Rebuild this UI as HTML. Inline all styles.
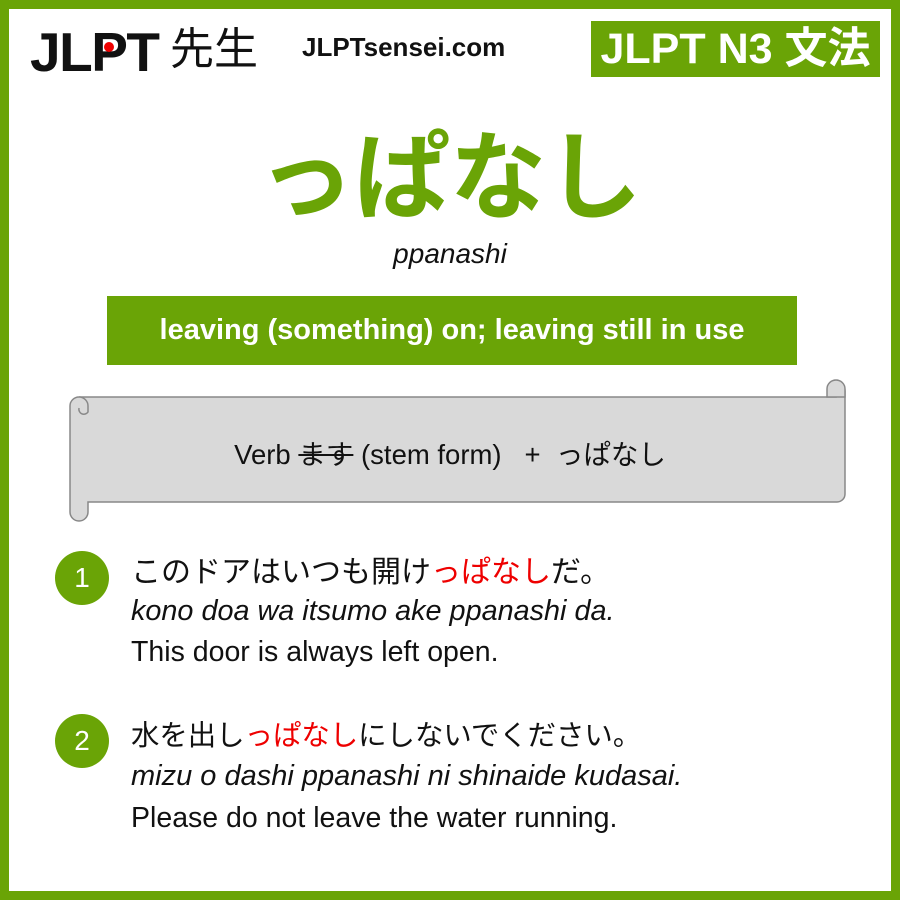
<!DOCTYPE html>
<html><head><meta charset="utf-8"><style>
*{margin:0;padding:0;box-sizing:border-box}
body{width:900px;height:900px;background:#fff;position:relative;overflow:hidden;font-family:"Liberation Sans","Noto Sans CJK JP",sans-serif}
.frame{position:absolute;left:0;top:0;width:900px;height:900px;border:9px solid #6aa406}
.a{position:absolute;white-space:nowrap}
.c{border-radius:50%;background:#6aa406;color:#fff;width:54px;height:54px;text-align:center;line-height:54px;font-size:28px}
.r{color:#e00}
</style></head><body>
<div class="frame"></div>
<div class="a" style="left:30px;top:20px;font-size:55px;font-weight:bold;letter-spacing:-1.5px;color:#111;line-height:64px">JL<span style="position:relative">P<span style="position:absolute;left:13px;top:21px;width:10px;height:10px;border-radius:50%;background:#e00"></span></span>T</div>
<div class="a" style="left:170px;top:22px;font-size:44px;color:#111;line-height:56px">先生</div>
<div class="a" style="left:302px;top:32px;font-size:26px;font-weight:bold;color:#111">JLPTsensei.com</div>
<div class="a" style="left:591px;top:21px;width:289px;height:56px;background:#6aa406;color:#fff;font-size:43px;font-weight:bold;line-height:56px;text-align:center">JLPT N3 文法</div>
<div class="a" style="left:0;width:900px;top:124px;text-align:center;font-size:96px;font-weight:bold;color:#6aa406;line-height:110px">っぱなし</div>
<div class="a" style="left:0;width:900px;top:238px;text-align:center;font-size:28px;font-style:italic;color:#111">ppanashi</div>
<div class="a" style="left:107px;top:296px;width:690px;height:69px;background:#6aa406;color:#fff;font-size:29px;font-weight:bold;line-height:69px;text-align:center">leaving (something) on; leaving still in use</div>
<svg class="a" style="left:0;top:0" width="900" height="900">
<g stroke="#888" stroke-width="1.5" fill="#d9d9d9">
<path d="M79 397 H836 V382 a9 9 0 0 1 9 9 V494 a8 8 0 0 1 -8 8 H88 V512 a9 9 0 0 1 -18 0 V406 a9 9 0 0 1 9 -9 Z"/>
<path d="M827 397 V389 a9 9 0 0 1 18 0 V397 Z"/>
<path d="M79 397 a9 9 0 0 1 9 9 v6 a5 5 0 0 1 -9 -4"/>
</g></svg>
<div class="a" style="left:0;width:900px;top:432px;text-align:center;font-size:27.5px;color:#111">Verb <s>ます</s> (stem form) &nbsp; + &nbsp;っぱなし</div>
<div class="a c" style="left:55px;top:551px">1</div>
<div class="a" style="left:131px;top:547px;font-size:30px;color:#111">このドアはいつも開け<span class="r">っぱなし</span>だ。</div>
<div class="a" style="left:131px;top:595px;font-size:28.8px;font-style:italic;color:#111">kono doa wa itsumo ake ppanashi da.</div>
<div class="a" style="left:131px;top:636px;font-size:28.5px;color:#111">This door is always left open.</div>
<div class="a c" style="left:55px;top:714px">2</div>
<div class="a" style="left:131px;top:713px;font-size:28.4px;color:#111">水を出し<span class="r">っぱなし</span>にしないでください。</div>
<div class="a" style="left:131px;top:760px;font-size:29px;font-style:italic;color:#111">mizu o dashi ppanashi ni shinaide kudasai.</div>
<div class="a" style="left:131px;top:802px;font-size:28.5px;color:#111">Please do not leave the water running.</div>
</body></html>
